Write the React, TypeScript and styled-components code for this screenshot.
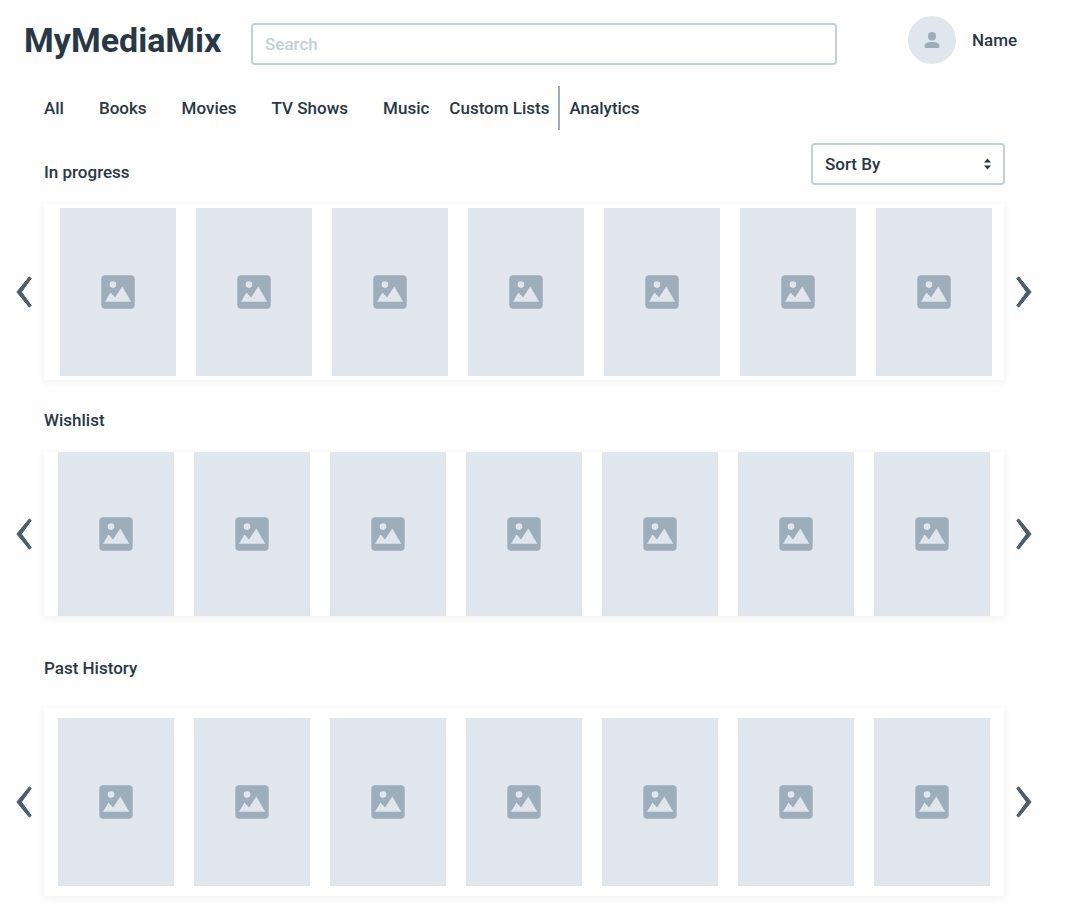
import React from "react";
import styled, { createGlobalStyle } from "styled-components";

const color = {
  text: "#293845",
  arrow: "#4b5c6b",
  icon: "#9eadba",
  border: "#c3cfd9",
  fill: "#dfe6ed",
  page: "#fefefe",
};

const GlobalStyle = createGlobalStyle`
  *, *::before, *::after { box-sizing: border-box; }
  body {
    margin: 0;
    background: ${color.page};
    color: ${color.text};
    font: 500 17px/24px Roboto, "Liberation Sans", sans-serif;
  }
  button, input, select { font: inherit; color: inherit; }
`;

const Page = styled.div`
  padding: 16px 48px 28px 16px;
`;

const Header = styled.header`
  display: flex;
  align-items: flex-start;
  padding: 0 14px 0 8px;
`;

const Title = styled.h1`
  flex: none;
  width: 227px;
  margin: 0;
  font-size: 34px;
  line-height: 48px;
  font-weight: 700;
`;

const SearchForm = styled.form`
  flex: 1;
  min-width: 0;
  margin: 7px 0 -1px;
`;

const SearchInput = styled.input`
  display: block;
  width: 100%;
  height: 42px;
  padding: 0 12px;
  border: 2px solid ${color.border};
  border-radius: 4px;
  background: #fff;
  outline: none;

  &::placeholder {
    color: ${color.border};
    opacity: 1;
  }
`;

const Profile = styled.a`
  display: flex;
  align-items: center;
  gap: 16px;
  flex: none;
  width: 110px;
  margin-left: 71px;
  color: inherit;
  text-decoration: none;
`;

const Avatar = styled.span`
  display: grid;
  place-items: center;
  flex: none;
  width: 48px;
  height: 48px;
  border-radius: 50%;
  background: ${color.fill};
`;

const Nav = styled.nav`
  display: flex;
  align-items: center;
  gap: 35px;
  margin-top: 22px;
  padding-left: 28px;
`;

const NavGroup = styled.div`
  display: flex;
  align-items: center;
  gap: 20px;
`;

const NavSplit = styled.div`
  display: flex;
  align-items: center;
  gap: 9px;
`;

const NavLink = styled.a`
  color: inherit;
  text-decoration: none;
  white-space: nowrap;
`;

const Divider = styled.span`
  width: 2px;
  height: 44px;
  background: ${color.icon};
`;

const Section = styled.section<{ $space: number }>`
  margin-top: ${(p) => p.$space}px;
`;

const SectionHead = styled.div`
  display: flex;
  align-items: flex-end;
  justify-content: space-between;
  padding: 0 27px 0 28px;
`;

const SectionTitle = styled.h2`
  margin: 0;
  font-size: 17px;
  line-height: 26px;
  font-weight: 500;
`;

const SortBox = styled.div`
  position: relative;
  width: 194px;

  svg {
    position: absolute;
    top: 15px;
    right: 14px;
    pointer-events: none;
  }
`;

const SortSelect = styled.select`
  display: block;
  width: 100%;
  height: 42px;
  padding: 0 32px 0 12px;
  border: 2px solid ${color.border};
  border-radius: 4px;
  background: #fff;
  appearance: none;
  outline: none;
`;

const Carousel = styled.div<{ $space: number }>`
  display: flex;
  align-items: center;
  gap: 12px;
  margin-top: ${(p) => p.$space}px;
`;

const ArrowButton = styled.button`
  flex: none;
  width: 16px;
  height: 32px;
  padding: 0;
  border: 0;
  background: none;
  cursor: pointer;

  svg { display: block; }
`;

const Shelf = styled.ul<{ $inset: string }>`
  display: grid;
  grid-template-columns: repeat(7, minmax(0, 1fr));
  gap: 20px;
  flex: 1;
  min-width: 0;
  margin: 0;
  padding: ${(p) => p.$inset};
  list-style: none;
  background: #fff;
  box-shadow: 0 2px 8px rgba(0, 0, 0, 0.06);
`;

const Cover = styled.li<{ $height: number }>`
  display: grid;
  place-items: center;
  height: ${(p) => p.$height}px;
  background: ${color.fill};
`;

const PictureIcon = () => (
  <svg width="34" height="34" viewBox="0 0 34 34" aria-hidden="true">
    <rect x="0.3" y="0.3" width="33.4" height="33.4" rx="3.7" fill={color.icon} />
    <circle cx="12" cy="9.6" r="3.3" fill={color.fill} />
    <path d="M4 26.7 9.5 17.6 14 22.4 21.3 11.6 30.2 26.7Z" fill={color.fill} />
  </svg>
);

const PersonIcon = () => (
  <svg width="16" height="16" viewBox="0 0 16 16" aria-hidden="true" fill={color.icon}>
    <ellipse cx="8" cy="4.2" rx="4" ry="4.2" />
    <path d="M0.7 16V13.4C0.7 10.9 4.2 10 8 10s7.3.9 7.3 3.4V16Z" />
  </svg>
);

const SortIcon = () => (
  <svg width="7" height="12" viewBox="0 0 7 12" aria-hidden="true" fill={color.text}>
    <path d="M3.5 0.4 7 4.4H0ZM3.5 11.4 0 7.4H7Z" />
  </svg>
);

const Chevron = ({ d }: { d: string }) => (
  <svg width="16" height="32" viewBox="0 0 16 32" aria-hidden="true">
    <path d={d} fill={color.arrow} stroke={color.arrow} strokeWidth="1" strokeLinejoin="round" />
  </svg>
);

type ShelfData = {
  title: string;
  space: number;
  gap: number;
  inset: string;
  height: number;
  sortable?: boolean;
};

const shelves: ShelfData[] = [
  { title: "In progress", space: 13, gap: 19, inset: "4px 12px 4px 16px", height: 168, sortable: true },
  { title: "Wishlist", space: 27, gap: 19, inset: "0 14px", height: 164 },
  { title: "Past History", space: 39, gap: 27, inset: "10px 14px", height: 168 },
];

const MediaShelf = ({ title, space, gap, inset, height, sortable }: ShelfData) => (
  <Section $space={space}>
    <SectionHead>
      <SectionTitle>{title}</SectionTitle>
      {sortable && (
        <SortBox>
          <SortSelect aria-label="Sort By">
            <option>Sort By</option>
          </SortSelect>
          <SortIcon />
        </SortBox>
      )}
    </SectionHead>
    <Carousel $space={gap}>
      <ArrowButton type="button" aria-label={`Previous in ${title}`}>
        <Chevron d="M13.3 0.9 15.2 2.5 5.4 16 15.2 29.5 13.3 31.1 0.9 16Z" />
      </ArrowButton>
      <Shelf $inset={inset}>
        {Array.from({ length: 7 }, (_, i) => (
          <Cover key={i} $height={height}>
            <PictureIcon />
          </Cover>
        ))}
      </Shelf>
      <ArrowButton type="button" aria-label={`Next in ${title}`}>
        <Chevron d="M2.7 0.9 0.8 2.5 10.6 16 0.8 29.5 2.7 31.1 15.1 16Z" />
      </ArrowButton>
    </Carousel>
  </Section>
);

export default function App() {
  return (
    <>
      <GlobalStyle />
      <Page>
        <Header>
          <Title>MyMediaMix</Title>
          <SearchForm role="search">
            <SearchInput type="text" placeholder="Search" aria-label="Search" />
          </SearchForm>
          <Profile href="#profile">
            <Avatar>
              <PersonIcon />
            </Avatar>
            Name
          </Profile>
        </Header>
        <Nav>
          <NavLink href="#all">All</NavLink>
          <NavLink href="#books">Books</NavLink>
          <NavLink href="#movies">Movies</NavLink>
          <NavLink href="#tv">TV Shows</NavLink>
          <NavGroup>
            <NavLink href="#music">Music</NavLink>
            <NavSplit>
              <NavLink href="#lists">Custom Lists</NavLink>
              <Divider />
              <NavLink href="#analytics">Analytics</NavLink>
            </NavSplit>
          </NavGroup>
        </Nav>
        <main>
          {shelves.map((shelf) => (
            <MediaShelf key={shelf.title} {...shelf} />
          ))}
        </main>
      </Page>
    </>
  );
}
